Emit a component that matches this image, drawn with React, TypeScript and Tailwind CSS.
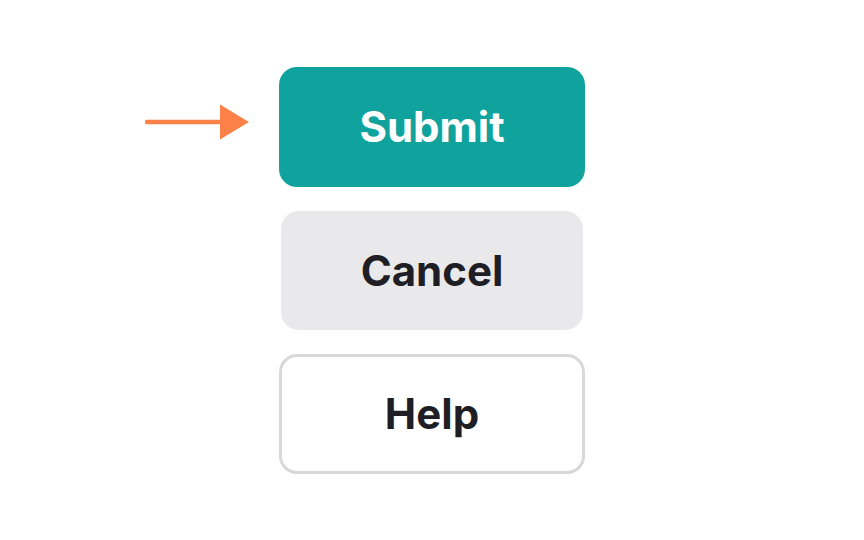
export default function App() {
  return (
    <div
      className="h-[540px] w-full bg-white flex items-center justify-center"
      style={{ fontFamily: 'Inter, "Noto Sans", sans-serif' }}
    >
      <div className="flex flex-col items-center gap-6">
        <div className="relative">
          <svg
            className="absolute right-full top-[37px] mr-[28px]"
            width="106"
            height="36"
            viewBox="0 0 106 36"
            aria-hidden
          >
            <line x1="2" y1="18" x2="78" y2="18" stroke="#fc8148" strokeWidth="4.5" strokeLinecap="round" />
            <polygon points="75,0.5 104,18 75,35.5" fill="#fc8148" />
          </svg>
          <button className="w-[306px] h-[120px] rounded-[18px] bg-[#10a39e] text-white text-[42px] font-bold">
            Submit
          </button>
        </div>
        <button className="w-[302px] h-[119px] rounded-[18px] bg-[#e9e9ec] text-[#1e1e24] text-[42px] font-bold">
          Cancel
        </button>
        <button className="w-[306px] h-[120px] rounded-[18px] bg-white border-[3px] border-[#d8d8d8] text-[#1e1e24] text-[42px] font-bold">
          Help
        </button>
      </div>
    </div>
  );
}
